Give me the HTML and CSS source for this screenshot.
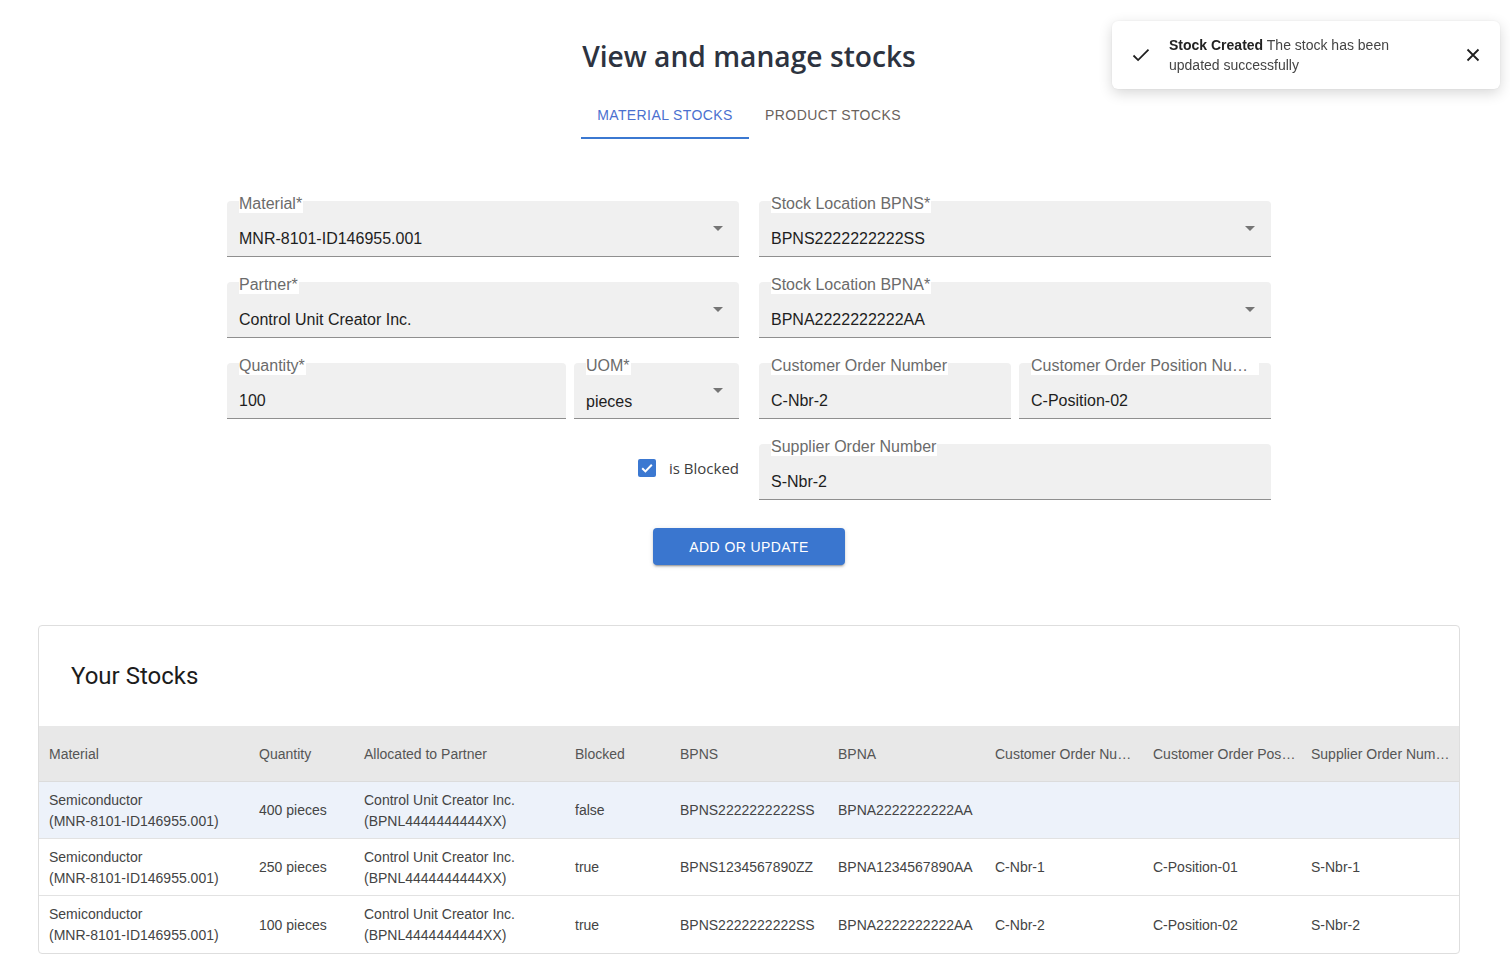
FILE: index.html
```html
<!DOCTYPE html>
<html lang="en">
<head>
<meta charset="utf-8">
<title>Stocks</title>
<link rel="stylesheet" href="styles.css">
</head>
<body>
<div class="page">
  <header class="head">
    <h1 class="title">View and manage stocks</h1>
    <nav class="tabs">
      <div class="tab active">Material Stocks</div>
      <div class="tab">Product Stocks</div>
    </nav>
  </header>

  <form class="form">
    <div class="field select">
      <span class="label">Material*</span>
      <span class="value">MNR-8101-ID146955.001</span>
      <span class="arrow"></span>
    </div>
    <div class="field select">
      <span class="label">Stock Location BPNS*</span>
      <span class="value">BPNS2222222222SS</span>
      <span class="arrow"></span>
    </div>
    <div class="field select">
      <span class="label">Partner*</span>
      <span class="value">Control Unit Creator Inc.</span>
      <span class="arrow"></span>
    </div>
    <div class="field select">
      <span class="label">Stock Location BPNA*</span>
      <span class="value">BPNA2222222222AA</span>
      <span class="arrow"></span>
    </div>
    <div class="pair">
      <div class="field qty">
        <span class="label">Quantity*</span>
        <span class="value">100</span>
      </div>
      <div class="field select uom">
        <span class="label">UOM*</span>
        <span class="value low">pieces</span>
        <span class="arrow"></span>
      </div>
    </div>
    <div class="pair">
      <div class="field half">
        <span class="label">Customer Order Number</span>
        <span class="value">C-Nbr-2</span>
      </div>
      <div class="field half">
        <span class="label">Customer Order Position Number</span>
        <span class="value">C-Position-02</span>
      </div>
    </div>
    <div class="check-cell">
      <span class="checkbox">
        <svg viewBox="0 0 18 18" width="18" height="18"><path d="M4.2 9.3l3.2 3.1 6.4-6.6" fill="none" stroke="#fff" stroke-width="2"/></svg>
      </span>
      <span class="check-label">is Blocked</span>
    </div>
    <div class="field">
      <span class="label">Supplier Order Number</span>
      <span class="value">S-Nbr-2</span>
    </div>
  </form>

  <div class="actions">
    <button class="btn" type="button">Add or Update</button>
  </div>

  <section class="card">
    <h2 class="card-title">Your Stocks</h2>
    <div class="table">
      <div class="row header">
        <div class="c c1">Material</div>
        <div class="c c2">Quantity</div>
        <div class="c c3">Allocated to Partner</div>
        <div class="c c4">Blocked</div>
        <div class="c c5">BPNS</div>
        <div class="c c6">BPNA</div>
        <div class="c c7">Customer Order Number</div>
        <div class="c c8">Customer Order Position</div>
        <div class="c c9">Supplier Order Number</div>
      </div>
      <div class="row sel">
        <div class="c c1">Semiconductor<br>(MNR-8101-ID146955.001)</div>
        <div class="c c2">400 pieces</div>
        <div class="c c3">Control Unit Creator Inc.<br>(BPNL4444444444XX)</div>
        <div class="c c4">false</div>
        <div class="c c5">BPNS2222222222SS</div>
        <div class="c c6">BPNA2222222222AA</div>
        <div class="c c7"></div>
        <div class="c c8"></div>
        <div class="c c9"></div>
      </div>
      <div class="row">
        <div class="c c1">Semiconductor<br>(MNR-8101-ID146955.001)</div>
        <div class="c c2">250 pieces</div>
        <div class="c c3">Control Unit Creator Inc.<br>(BPNL4444444444XX)</div>
        <div class="c c4">true</div>
        <div class="c c5">BPNS1234567890ZZ</div>
        <div class="c c6">BPNA1234567890AA</div>
        <div class="c c7">C-Nbr-1</div>
        <div class="c c8">C-Position-01</div>
        <div class="c c9">S-Nbr-1</div>
      </div>
      <div class="row last">
        <div class="c c1">Semiconductor<br>(MNR-8101-ID146955.001)</div>
        <div class="c c2">100 pieces</div>
        <div class="c c3">Control Unit Creator Inc.<br>(BPNL4444444444XX)</div>
        <div class="c c4">true</div>
        <div class="c c5">BPNS2222222222SS</div>
        <div class="c c6">BPNA2222222222AA</div>
        <div class="c c7">C-Nbr-2</div>
        <div class="c c8">C-Position-02</div>
        <div class="c c9">S-Nbr-2</div>
      </div>
    </div>
  </section>
</div>

<div class="toast">
  <svg class="toast-icon" viewBox="0 0 20 20" width="20" height="20"><path d="M2.5 10.5l4.6 4.6L17.5 4.7" fill="none" stroke="#1f1f1f" stroke-width="1.8"/></svg>
  <p class="toast-text"><b>Stock Created</b> The stock has been updated successfully</p>
  <svg class="toast-close" viewBox="0 0 14 14" width="14" height="14"><path d="M1.5 1.5l11 11M12.5 1.5l-11 11" fill="none" stroke="#1f1f1f" stroke-width="1.8"/></svg>
</div>
</body>
</html>
```

FILE: styles.css
```css
* { box-sizing: border-box; }
html, body { margin: 0; padding: 0; background: #fff; }
body { font-family: "Liberation Sans", Arial, sans-serif; color: #222; }

.page { width: 1498px; padding-top: 36px; padding-bottom: 22px; }

.head { display: flex; flex-direction: column; align-items: center; }
.title {
  margin: 0;
  font-family: "Open Sans", "Noto Sans", sans-serif;
  font-weight: 600;
  font-size: 28.2px;
  line-height: 40px;
  color: #2d3340;
}
.tabs { display: flex; margin-top: 15px; }
.tab {
  width: 168px;
  height: 48px;
  display: flex; align-items: center; justify-content: center;
  font-size: 14px;
  text-transform: uppercase;
  letter-spacing: 0.02857em;
  color: #6a625c;
  border-bottom: 2px solid transparent;
  padding-top: 2px;
}
.tab.active { color: #4b70cf; border-bottom-color: #3b78d1; }

.form {
  margin: 62px auto 0;
  width: 1044px;
  display: grid;
  grid-template-columns: 512px 512px;
  column-gap: 20px;
  row-gap: 25px;
}
.pair { display: flex; gap: 8px; }
.field {
  position: relative;
  height: 56px;
  background: #f0f0f0;
  border-radius: 4px 4px 0 0;
  border-bottom: 1px solid #8f8f8f;
}
.qty { width: 339px; }
.uom { width: 165px; }
.half { width: 252px; }
.label {
  position: absolute;
  top: -6px;
  left: 12px;
  max-width: calc(100% - 24px);
  padding-right: 1px;
  background: #fff;
  font-size: 16px;
  line-height: 18px;
  color: #6b6b6b;
  white-space: nowrap;
  overflow: hidden;
  text-overflow: ellipsis;
}
.value {
  display: block;
  padding: 28px 12px 0;
  font-size: 16px;
  line-height: 19px;
  color: #1e1e1e;
}
.value.low { padding-top: 29px; }
.arrow {
  position: absolute;
  right: 16px;
  top: 25px;
  width: 0; height: 0;
  border-left: 5px solid transparent;
  border-right: 5px solid transparent;
  border-top: 5px solid #757575;
}

.check-cell {
  display: flex;
  justify-content: flex-end;
  align-items: center;
  gap: 13px;
  padding-bottom: 8px;
}
.checkbox {
  width: 18px; height: 18px;
  border-radius: 2px;
  background: #3b78d1;
  display: block;
}
.checkbox svg { display: block; }
.check-label {
  font-family: "Open Sans", "Noto Sans", sans-serif;
  font-size: 15px;
  color: #3d3d3d;
}

.actions { display: flex; justify-content: center; margin-top: 28px; }
.btn {
  width: 192px; height: 37px;
  border: 0;
  border-radius: 4px;
  background: #3a76cf;
  color: #fff;
  font-family: "Liberation Sans", Arial, sans-serif;
  font-size: 14px;
  font-weight: 400;
  letter-spacing: 0.02857em;
  text-transform: uppercase;
  box-shadow: 0 3px 1px -2px rgba(0,0,0,.2), 0 2px 2px 0 rgba(0,0,0,.14), 0 1px 5px 0 rgba(0,0,0,.12);
}

.card {
  margin: 60px 38px 0;
  border: 1px solid #dedede;
  border-radius: 4px;
  overflow: hidden;
}
.card-title {
  margin: 0;
  padding: 36px 32px;
  font-family: Roboto, sans-serif;
  font-size: 24px;
  font-weight: 400;
  line-height: 28px;
  color: #1c1c1c;
}
.table { font-size: 14px; color: #444; }
.row { display: flex; height: 57px; border-bottom: 1px solid #e2e2e2; }
.row.last { border-bottom: 0; }
.row.header { height: 56px; background: #e8e8e8; color: #555; border-bottom: 1px solid #dcdcdc; }
.row.sel { background: #edf2fa; }
.c {
  padding: 0 10px;
  display: flex;
  align-items: center;
  line-height: 21px;
  white-space: nowrap;
  padding-top: 1px;
}
.header .c {
  overflow: hidden;
  text-overflow: ellipsis;
  display: block;
  line-height: 54px;
  padding-right: 3px;
}
.header .c9 { padding-right: 8px; }
.c1 { width: 210px; }
.c2 { width: 105px; }
.c3 { width: 211px; }
.c4 { width: 105px; }
.c5 { width: 158px; }
.c6 { width: 157px; }
.c7 { width: 158px; }
.c8 { width: 158px; }
.c9 { width: 158px; }

.toast {
  position: fixed;
  top: 21px;
  right: 10px;
  width: 388px;
  height: 68px;
  background: #fff;
  border-radius: 6px;
  box-shadow: 0 4px 14px rgba(0,0,0,0.16), 0 0 2px rgba(0,0,0,0.08);
  display: flex;
  align-items: center;
  padding: 0 20px 0 19px;
}
.toast-icon { flex: none; margin-right: 18px; }
.toast-text {
  margin: 0;
  width: 250px;
  font-size: 14px;
  line-height: 20px;
  color: #444;
}
.toast-text b { color: #222; }
.toast-close { flex: none; margin-left: auto; }
```
